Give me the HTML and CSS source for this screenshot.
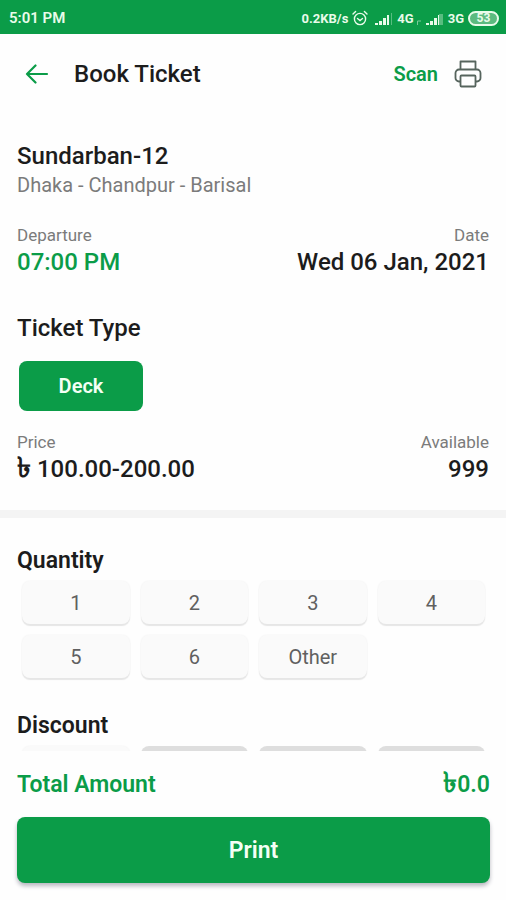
FILE: index.html
```html
<!DOCTYPE html>
<html lang="en">
<head>
<meta charset="utf-8">
<meta name="viewport" content="width=device-width, initial-scale=1">
<title>Book Ticket</title>
<link rel="stylesheet" href="styles.css">
</head>
<body>
<div class="status">
  <span>5:01 PM</span>
  <div class="status-right">
    <span>0.2KB/s</span>
    <svg class="alarm" width="16" height="16" viewBox="0 0 16 16" fill="none" stroke="currentColor" stroke-width="1.4" stroke-linecap="round"><circle cx="8" cy="9" r="5.6"/><path d="M5.5 8.500 8 10.500l2.500-2M1 4l2.600-2.600M15 4l-2.600-2.600"/></svg>
    <svg class="signal" width="18" height="13" viewBox="0 0 18 13" fill="currentColor"><path d="M0 13v-2h3v2zM4 13V9h3v4zM8 13V6h3v7zM12 13V3h2v10z"/><path opacity=".35" d="M16 13V1h1v12z"/></svg>
    <span>4G</span>
    <svg class="roam" width="6" height="6" viewBox="0 0 6 6" fill="none" stroke="currentColor" opacity=".5"><path d="M1.500 6V2H5"/></svg>
    <svg class="signal" width="18" height="13" viewBox="0 0 18 13" fill="currentColor"><path d="M0 13v-2h3v2zM4 13V9h3v4zM8 13V6h3v7zM12 13V3h1v10z"/><path opacity=".35" d="M13 13V2h4v11z"/></svg>
    <span>3G</span>
    <span class="battery">53</span>
  </div>
</div>
<header class="topbar">
  <button class="icon-button" aria-label="Back"><svg width="24" height="20" viewBox="0 0 24 20" fill="none" stroke="currentColor" stroke-width="2.200" stroke-linecap="round" stroke-linejoin="round"><path d="M22 10H2M10.500 1.500 2 10l8.500 8.500"/></svg></button>
  <h1>Book Ticket</h1>
  <a class="scan" href="#">Scan</a>
  <button class="icon-button printer" aria-label="Printer"><svg width="28" height="28" viewBox="0 0 28 28" fill="none" stroke="currentColor" stroke-width="1.800" stroke-linejoin="round"><path d="M6.500 9.500V1.500h15v8M6.500 21.500H5a3.500 3.500 0 0 1-3.500-3.500v-5A3.500 3.500 0 0 1 5 9.500h18a3.500 3.500 0 0 1 3.500 3.500v5a3.500 3.500 0 0 1-3.500 3.500h-1.500"/><rect x="6.500" y="15.500" width="15" height="11" rx="1"/></svg></button>
</header>
<main>
  <section class="trip">
    <h2>Sundarban-12</h2>
    <p class="route">Dhaka - Chandpur - Barisal</p>
    <div class="facts">
      <div><p class="label">Departure</p><p class="value green">07:00 PM</p></div>
      <div class="end"><p class="label">Date</p><p class="value">Wed 06 Jan, 2021</p></div>
    </div>
    <h2>Ticket Type</h2>
    <button class="type">Deck</button>
    <div class="facts">
      <div><p class="label">Price</p><p class="value"><span class="taka">৳</span> 100.00-200.00</p></div>
      <div class="end"><p class="label">Available</p><p class="value">999</p></div>
    </div>
  </section>
  <section class="choices">
    <h2>Quantity</h2>
    <div class="options">
      <button>1</button><button>2</button><button>3</button><button>4</button>
      <button>5</button><button>6</button><button>Other</button>
    </div>
    <h2>Discount</h2>
    <div class="options">
      <button aria-label="No discount"></button><button disabled aria-label="Discount 1"></button><button disabled aria-label="Discount 2"></button><button disabled aria-label="Discount 3"></button>
    </div>
  </section>
</main>
<footer>
  <div class="total"><span>Total Amount</span><span><span class="taka">৳</span>0.0</span></div>
  <button class="print">Print</button>
</footer>
</body>
</html>
```
FILE: styles.css
```css
* { box-sizing: border-box; }
:root { --green: #0b9c48; --ink: #1c1c1c; --gray: #7b7b7b; }
body {
  margin: 0;
  height: 100vh;
  display: flex;
  flex-direction: column;
  background: #fefefe;
  color: var(--ink);
  font-family: Roboto, "Noto Sans", sans-serif;
  font-size: 23px;
  font-weight: 600;
}
h1, h2, p { margin: 0; font-size: inherit; font-weight: inherit; }
button { font: inherit; border: 0; padding: 0; }
.status {
  flex: none;
  height: 34px;
  padding: 2px 7px 0 9px;
  display: flex;
  align-items: center;
  justify-content: space-between;
  background: var(--green);
  color: #e9fbea;
  font-size: 15px;
  font-weight: 600;
}
.status-right { display: flex; align-items: center; gap: 4px; font-size: 13px; font-weight: 700; }
.status-right .signal { margin-left: 3px; }
.status-right .roam { align-self: flex-end; margin: 0 -3px 1px -2px; }
.battery {
  width: 31px;
  height: 15px;
  border: 2px solid currentColor;
  border-radius: 8px;
  background: #5cbb80;
  font-size: 12px;
  line-height: 11px;
  text-align: center;
}
.topbar {
  flex: none;
  height: 80px;
  padding: 0 24px 0 25px;
  display: flex;
  align-items: center;
}
.topbar h1 { margin-left: 25px; flex: 1; font-size: 24px; font-weight: 500; }
.icon-button { display: flex; background: none; color: var(--green); }
.scan { color: var(--green); text-decoration: none; font-size: 20px; }
.printer { margin-left: 16px; color: #56645d; }
main { flex: 1; min-height: 0; overflow: hidden; }
.trip { padding: 26px 17px 24px; border-bottom: 8px solid #f4f4f4; font-size: 24px; font-weight: 500; }
h2 { line-height: 32px; }
.route { color: var(--gray); font-size: 20px; font-weight: 400; line-height: 26px; }
.facts { display: flex; justify-content: space-between; margin: 26px 0 33px; }
.type + .facts { margin: 20px 0 0; }
.label { color: var(--gray); font-size: 17px; font-weight: 400; line-height: 22px; }
.value { line-height: 33px; }
.end { text-align: right; }
.green { color: var(--green); }
.taka { font-size: 28px; font-weight: 700; line-height: 1; }
.type {
  display: block;
  width: 124px;
  height: 50px;
  margin: 17px 0 0 2px;
  border-radius: 8px;
  background: var(--green);
  color: #f4fff4;
  font-size: 20px;
  font-weight: 600;
}
.choices { padding: 27px 17px 0; }
.options {
  display: grid;
  grid-template-columns: repeat(4, 1fr);
  gap: 11px;
  padding: 4px 4px 0 5px;
  margin-bottom: 32px;
}
.options button {
  height: 43px;
  border-radius: 8px;
  background: #fafafa;
  box-shadow: 0 2px 1px #e6e6e6, 0 0 2px #f0f0f0;
  color: #606060;
  font-size: 20px;
  font-weight: 400;
}
.options button:disabled { background: #dedede; box-shadow: none; }
footer { flex: none; padding: 16px 16px 17px 17px; }
.total {
  display: flex;
  justify-content: space-between;
  color: var(--green);
  line-height: 36px;
}
.print {
  display: block;
  width: 100%;
  height: 66px;
  margin-top: 14px;
  border-radius: 8px;
  background: var(--green);
  box-shadow: 0 3px 4px #b8b8c0;
  color: #f4fff4;
}
```
